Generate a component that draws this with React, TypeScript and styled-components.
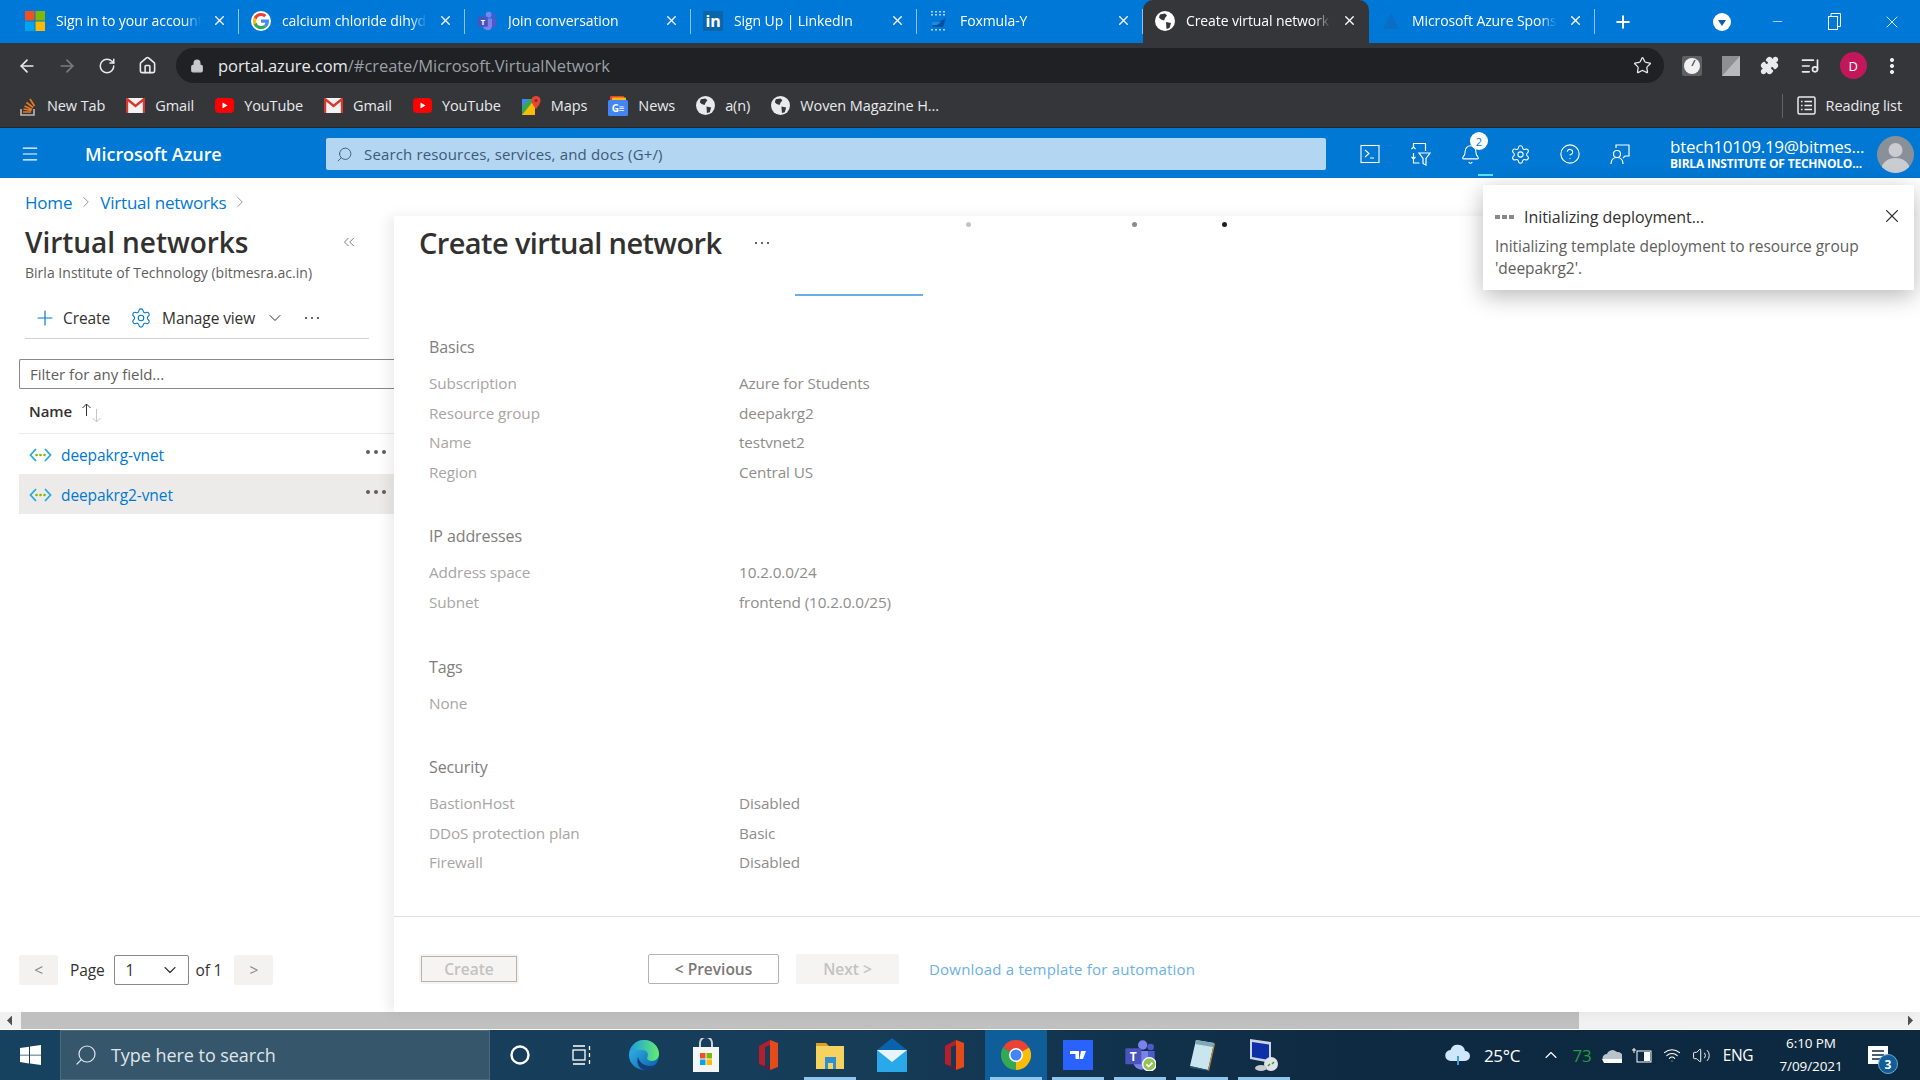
import React from "react";
import styled, { createGlobalStyle } from "styled-components";
import {
  ArrowLeft,
  ArrowRight,
  RotateCw,
  Home as HomeIcon,
  Lock,
  Star,
  Puzzle,
  X,
  Plus,
  Minus,
  Settings,
  ChevronRight,
  ChevronDown,
  ChevronsLeft,
  Search,
  Menu,
  Bell,
  CircleHelp,
  ChevronUp,
  Wifi,
  Volume2,
  ListMusic,
} from "lucide-react";

const GlobalStyle = createGlobalStyle`
  html, body {
    margin: 0;
    padding: 0;
    width: 1920px;
    height: 1080px;
    overflow: hidden;
    background: #fff;
    font-family: "Open Sans", "Noto Sans", sans-serif;
  }
  * { box-sizing: border-box; }
`;

const Screen = styled.div`
  position: relative;
  width: 1920px;
  height: 1080px;
  display: flex;
  flex-direction: column;
  overflow: hidden;
`;

const FlippedSearch = styled(Search)`
  transform: scaleX(-1);
`;

/* ---------- chrome tabs ---------- */

const TabStrip = styled.div`
  height: 43px;
  background: #0078d7;
  display: flex;
  align-items: stretch;
  padding-left: 13px;
`;

const Tab = styled.div<{ $active?: boolean }>`
  width: 226px;
  display: flex;
  align-items: center;
  padding: 0 12px 2px;
  gap: 11px;
  color: #fff;
  font-size: 14px;
  letter-spacing: -0.1px;
  position: relative;
  background: ${(p) => (p.$active ? "#35363a" : "transparent")};
  border-radius: ${(p) => (p.$active ? "10px 10px 0 0" : "0")};
  &::after {
    content: "";
    position: absolute;
    right: 0;
    top: 9px;
    bottom: 9px;
    width: 1px;
    background: ${(p) => (p.$active ? "transparent" : "rgba(255,255,255,0.55)")};
  }
`;

const TabFavicon = styled.span`
  width: 20px;
  height: 20px;
  flex: none;
  display: flex;
  align-items: center;
  justify-content: center;
`;

const TabTitle = styled.span`
  flex: 1;
  overflow: hidden;
  white-space: nowrap;
  -webkit-mask-image: linear-gradient(90deg, #000 88%, transparent 100%);
  mask-image: linear-gradient(90deg, #000 88%, transparent 100%);
`;

const NewTabButton = styled.div`
  width: 56px;
  display: flex;
  align-items: center;
  justify-content: center;
  color: #fff;
`;

const WindowControls = styled.div`
  margin-left: auto;
  display: flex;
  align-items: center;
  color: #fff;
`;

const ProfileDrop = styled.div`
  width: 18px;
  height: 18px;
  border-radius: 50%;
  background: #fff;
  margin-right: 18px;
  display: flex;
  align-items: center;
  justify-content: center;
  &::after {
    content: "";
    border-left: 4px solid transparent;
    border-right: 4px solid transparent;
    border-top: 6px solid #0d5fa8;
    margin-top: 2px;
  }
`;

const WindowButton = styled.div`
  width: 57px;
  height: 36px;
  display: flex;
  align-items: center;
  justify-content: center;
`;

/* ---------- address bar ---------- */

const Toolbar = styled.div`
  height: 45px;
  background: #35363a;
  display: flex;
  align-items: center;
  color: #e8eaed;
`;

const NavButton = styled.div<{ $muted?: boolean }>`
  width: 40px;
  height: 36px;
  display: flex;
  align-items: center;
  justify-content: center;
  color: ${(p) => (p.$muted ? "#7b7c7f" : "#e8eaed")};
`;

const NavGroup = styled.div`
  display: flex;
  padding-left: 7px;
  width: 176px;
`;

const Omnibox = styled.div`
  width: 1488px;
  height: 35px;
  border-radius: 18px;
  background: #202124;
  display: flex;
  align-items: center;
  padding: 0 12px 0 14px;
  font-size: 16.5px;
  letter-spacing: -0.06px;
  color: #9aa0a6;
`;

const UrlHost = styled.span`
  color: #e8eaed;
  margin-left: 14px;
`;

const OmniboxStar = styled.span`
  margin-left: auto;
  display: flex;
  color: #e8eaed;
`;

const ToolbarIcons = styled.div`
  flex: 1;
  display: flex;
  align-items: center;
  justify-content: space-between;
  padding: 0 26px 0 18px;
`;

const ProfileCircle = styled.div`
  width: 27px;
  height: 27px;
  border-radius: 50%;
  background: #c2185b;
  color: #fff;
  font-size: 13px;
  margin-right: 3px;
  display: flex;
  align-items: center;
  justify-content: center;
`;

const KebabDots = styled.div`
  width: 4px;
  height: 16px;
  background: radial-gradient(circle at 2px 2px, #e8eaed 1.9px, transparent 2.2px) 0 0 / 4px 6px;
`;

/* ---------- bookmarks ---------- */

const BookmarksBar = styled.div`
  height: 40px;
  background: #35363a;
  border-bottom: 1px solid #24262a;
  display: flex;
  align-items: center;
  padding: 0 0 4px 19px;
  color: #e8eaed;
  font-size: 14.5px;
  letter-spacing: -0.1px;
  gap: 21px;
`;

const Bookmark = styled.div`
  display: flex;
  align-items: center;
  gap: 10px;
  white-space: nowrap;
`;

const ReadingList = styled.div`
  margin-left: auto;
  border-left: 1px solid #5f6368;
  height: 24px;
  padding: 0 18px 0 14px;
  display: flex;
  align-items: center;
  gap: 10px;
`;

/* ---------- azure header ---------- */

const AzureBar = styled.header`
  height: 50px;
  background: #0078d4;
  display: flex;
  align-items: center;
  padding-top: 2px;
  color: #fff;
`;

const Hamburger = styled.div`
  width: 85px;
  padding-left: 20px;
  display: flex;
`;

const Brand = styled.div`
  width: 241px;
  font-size: 18px;
  font-weight: 600;
  letter-spacing: -0.05px;
`;

const PortalSearch = styled.div`
  width: 1000px;
  height: 32px;
  background: #b3d6f2;
  border-radius: 2px;
  display: flex;
  align-items: center;
  gap: 11px;
  padding-left: 10px;
  color: #3c5a78;
  font-size: 15px;
  letter-spacing: 0.15px;
`;

const HeaderIcons = styled.div`
  display: flex;
  margin-left: 19px;
`;

const HeaderIcon = styled.div<{ $active?: boolean }>`
  position: relative;
  width: 50px;
  height: 50px;
  display: flex;
  align-items: center;
  justify-content: center;
  &::after {
    content: "";
    display: ${(p) => (p.$active ? "block" : "none")};
    position: absolute;
    left: 33px;
    bottom: 3px;
    width: 15px;
    height: 2px;
    background: #50e6ff;
  }
`;

const NotifyBadge = styled.span`
  position: absolute;
  top: 3px;
  left: 25px;
  width: 18px;
  height: 18px;
  border-radius: 50%;
  background: #fff;
  color: #0078d4;
  font-size: 11px;
  display: flex;
  align-items: center;
  justify-content: center;
`;

const Account = styled.div`
  margin-left: 25px;
  width: 207px;
  padding-top: 2px;
  display: flex;
  flex-direction: column;
  line-height: 17px;
`;

const AccountName = styled.div`
  font-size: 17px;
  letter-spacing: -0.25px;
  white-space: nowrap;
`;

const AccountOrg = styled.div`
  font-size: 12px;
  font-weight: 700;
  letter-spacing: -0.2px;
  white-space: nowrap;
`;

const Avatar = styled.div`
  width: 37px;
  height: 37px;
  border-radius: 50%;
  background: #8a9099;
  overflow: hidden;
  display: flex;
`;

/* ---------- page ---------- */

const Main = styled.main`
  flex: 1;
  display: flex;
  flex-direction: column;
  min-height: 0;
  background: #fff;
`;

const Breadcrumb = styled.nav`
  height: 38px;
  padding: 10px 0 0 25px;
  display: flex;
  align-items: center;
  gap: 5px;
  font-size: 17px;
  letter-spacing: -0.2px;
  color: #0078d4;
`;

const Crumb = styled.span`
  color: #0078d4;
`;

const CrumbSep = styled.span`
  color: #8a8886;
  display: flex;
`;

const Workspace = styled.div`
  flex: 1;
  display: flex;
  min-height: 0;
`;

const Sidebar = styled.aside`
  width: 394px;
  flex: none;
  display: flex;
  flex-direction: column;
  padding-top: 8px;
`;

const SidebarHead = styled.div`
  padding: 0 25px;
  display: flex;
  align-items: center;
  justify-content: space-between;
  height: 36px;
`;

const SidebarTitle = styled.h1`
  margin: 0;
  font-size: 28px;
  font-weight: 600;
  letter-spacing: -0.05px;
  color: #323130;
  white-space: nowrap;
`;

const Collapse = styled.span`
  display: flex;
  color: #605e5c;
  margin-right: 11px;
`;

const SidebarSub = styled.div`
  padding-left: 25px;
  height: 26px;
  line-height: 26px;
  font-size: 14px;
  letter-spacing: 0.02px;
  color: #605e5c;
`;

const CommandBar = styled.div`
  margin: 10px 25px 0;
  height: 43px;
  border-bottom: 1px solid #d2d0ce;
  display: flex;
  align-items: center;
  font-size: 15.5px;
  letter-spacing: -0.1px;
  color: #323130;
  padding: 2px 0 0 8px;
`;

const CommandItem = styled.div<{ $gap: number }>`
  display: flex;
  align-items: center;
  gap: ${(p) => p.$gap}px;
  margin-right: 20px;
  color: #323130;
  white-space: nowrap;
`;

const MoreDots = styled.span<{ $color?: string; $size?: number }>`
  display: flex;
  gap: ${(p) => ((p.$size ?? 2) > 2 ? p.$size : 4)}px;
  & > i {
    display: block;
    width: ${(p) => p.$size ?? 2}px;
    height: ${(p) => p.$size ?? 2}px;
    border-radius: 50%;
    background: ${(p) => p.$color ?? "#323130"};
  }
`;

const FilterBox = styled.div`
  margin: 20px 0 0 19px;
  height: 30px;
  border: 1px solid #8a8886;
  border-right: none;
  border-radius: 2px 0 0 2px;
  display: flex;
  align-items: center;
  padding-left: 10px;
  font-size: 15px;
  letter-spacing: 0;
  color: #605e5c;
`;

const ColumnHeader = styled.div`
  margin-left: 19px;
  height: 45px;
  border-bottom: 1px solid #edebe9;
  display: flex;
  align-items: center;
  padding-left: 10px;
  font-size: 15px;
  font-weight: 600;
  letter-spacing: -0.1px;
  color: #323130;
  gap: 9px;
`;

const SortArrows = styled.span`
  display: flex;
  align-items: center;
  margin-top: 3px;
`;

const ResourceRow = styled.div<{ $selected?: boolean }>`
  margin-left: 19px;
  height: 40px;
  background: ${(p) => (p.$selected ? "#edebe9" : "transparent")};
  display: flex;
  align-items: center;
  padding: 1px 8px 0 10px;
  gap: 9px;
  font-size: 15.5px;
  letter-spacing: -0.1px;
  color: #0078d4;
`;

const RowMenu = styled.span`
  margin-left: auto;
  margin-bottom: 5px;
`;

const Pager = styled.div`
  margin-top: auto;
  margin-bottom: 27px;
  padding-left: 19px;
  height: 30px;
  display: flex;
  align-items: center;
  font-size: 15.5px;
  letter-spacing: -0.15px;
  color: #323130;
`;

const PagerArrow = styled.div`
  width: 39px;
  height: 30px;
  background: #f3f2f1;
  border-radius: 2px;
  color: #8a8886;
  display: flex;
  align-items: center;
  justify-content: center;
`;

const PagerLabel = styled.span<{ $left: number; $right: number }>`
  margin: 0 ${(p) => p.$right}px 0 ${(p) => p.$left}px;
`;

const PageSelect = styled.div`
  width: 75px;
  height: 30px;
  border: 1px solid #8a8886;
  border-radius: 2px;
  display: flex;
  align-items: center;
  justify-content: space-between;
  padding: 0 8px 0 10px;
`;

const Blade = styled.section`
  flex: 1;
  min-width: 0;
  display: flex;
  flex-direction: column;
  background: #fff;
  box-shadow: -6px 0 12px rgba(0, 0, 0, 0.07);
  position: relative;
`;

const BladeTitleRow = styled.div`
  height: 53px;
  margin-bottom: 1px;
  padding-left: 25px;
  display: flex;
  align-items: center;
  gap: 34px;
`;

const BladeTitle = styled.h2`
  margin: 0;
  font-size: 29px;
  font-weight: 600;
  letter-spacing: -0.6px;
  color: #323130;
  white-space: nowrap;
`;

const TabIndicator = styled.div`
  margin: 24px 0 0 401px;
  width: 128px;
  height: 2px;
  background: #69afe5;
`;

const BladeBody = styled.div`
  flex: 1;
  padding: 36px 0 0 35px;
`;

const ReviewSection = styled.div`
  margin-bottom: 34px;
`;

const SectionHeading = styled.div`
  height: 30px;
  line-height: 30px;
  margin-bottom: 7px;
  font-size: 16px;
  font-weight: 500;
  letter-spacing: -0.1px;
  color: #807e7c;
`;

const ReviewRow = styled.div`
  height: 29.6px;
  line-height: 29.6px;
  display: grid;
  grid-template-columns: 310px 1fr;
  font-size: 15.3px;
  letter-spacing: -0.12px;
`;

const ReviewLabel = styled.span`
  color: #a8a6a4;
`;

const ReviewValue = styled.span`
  color: #8f8d8b;
`;

const BladeFooter = styled.div`
  height: 96px;
  border-top: 1px solid #e1dfdd;
  padding: 37px 0 0 25px;
  display: flex;
  align-items: flex-start;
  font-size: 15px;
`;

const FooterButton = styled.div<{ $variant: "create" | "outline" | "disabled"; $width: number; $left: number }>`
  width: ${(p) => p.$width}px;
  height: 30px;
  margin-left: ${(p) => p.$left}px;
  display: flex;
  align-items: center;
  justify-content: center;
  border-radius: 2px;
  font-weight: 600;
  letter-spacing: 0;
  font-size: 15.5px;
  color: ${(p) => (p.$variant === "outline" ? "#7a7876" : "#c4c2c0")};
  background: ${(p) => (p.$variant === "outline" ? "#fff" : "#f5f4f3")};
  border: ${(p) => (p.$variant === "outline" ? "1px solid #b5b3b1" : "none")};
  outline: ${(p) => (p.$variant === "create" ? "1px solid #b5b3b1" : "none")};
  outline-offset: -3px;
`;

const TemplateLink = styled.a`
  margin-left: 30px;
  height: 30px;
  line-height: 30px;
  font-size: 15px;
  letter-spacing: 0.2px;
  color: #6cb0e8;
`;

const LoadingDot = styled.span<{ $left: number; $color: string }>`
  position: absolute;
  top: 222px;
  left: ${(p) => p.$left}px;
  width: 5px;
  height: 5px;
  border-radius: 50%;
  background: ${(p) => p.$color};
`;

const Toast = styled.div`
  position: absolute;
  left: 1483px;
  top: 185px;
  width: 431px;
  height: 105px;
  background: #fff;
  box-shadow: 0 6px 22px rgba(0, 0, 0, 0.28);
  padding: 21px 12px 0;
  color: #605e5c;
  font-size: 15.5px;
  letter-spacing: -0.05px;
`;

const ToastHead = styled.div`
  height: 22px;
  display: flex;
  align-items: center;
  gap: 10px;
  color: #323130;
  font-size: 16px;
  font-weight: 500;
  margin-bottom: 7px;
`;

const ToastDots = styled.span`
  display: flex;
  gap: 2px;
  & > i {
    display: block;
    width: 5px;
    height: 4px;
    background: #8a8886;
  }
`;

const ToastClose = styled.span`
  position: absolute;
  right: 11px;
  top: 20px;
  display: flex;
  color: #323130;
`;

const ToastBody = styled.div`
  line-height: 22px;
  width: 380px;
`;

/* ---------- page scrollbar ---------- */

const PageScroll = styled.div`
  height: 18px;
  background: #f1f1f1;
  border-bottom: 1px solid #fff;
  display: flex;
  align-items: center;
  padding-right: 7px;
`;

const ScrollArrow = styled.span<{ $dir: "left" | "right" }>`
  flex: none;
  width: 5px;
  height: 10px;
  margin-left: ${(p) => (p.$dir === "left" ? "7px" : "auto")};
  margin-right: ${(p) => (p.$dir === "left" ? "9px" : "0")};
  background: #505050;
  clip-path: ${(p) =>
    p.$dir === "left" ? "polygon(100% 0, 0 50%, 100% 100%)" : "polygon(0 0, 100% 50%, 0 100%)"};
`;

const ScrollThumb = styled.span`
  width: 1558px;
  height: 17px;
  background: #c0c0c0;
`;

/* ---------- windows taskbar ---------- */

const Taskbar = styled.footer`
  height: 50px;
  flex: none;
  background: linear-gradient(90deg, #17425f 0%, #163c58 45%, #0e2a42 70%, #0d2940 100%);
  display: flex;
  align-items: stretch;
  color: #fff;
`;

const StartButton = styled.div`
  width: 60px;
  display: flex;
  align-items: center;
  justify-content: center;
`;

const TaskSearch = styled.div`
  width: 430px;
  background: #36566b;
  border: 1px solid #4a6a80;
  display: flex;
  align-items: center;
  padding-left: 13px;
  gap: 13px;
  font-size: 18px;
  letter-spacing: -0.05px;
  color: #dfe6ea;
`;

const TaskApps = styled.div`
  display: flex;
  margin-left: -1px;
`;

const TaskApp = styled.div<{ $open?: boolean; $active?: boolean }>`
  width: 62px;
  position: relative;
  display: flex;
  align-items: center;
  justify-content: center;
  background: ${(p) => (p.$active ? "#0f5e99" : "transparent")};
  &::after {
    content: "";
    display: ${(p) => (p.$open ? "block" : "none")};
    position: absolute;
    left: 5px;
    right: 5px;
    bottom: 0;
    height: 3px;
    background: #90c6ee;
  }
`;

const Tray = styled.div`
  margin-left: auto;
  padding-right: 18px;
  display: flex;
  align-items: center;
  font-size: 17px;
  color: #fff;
`;

const TrayItem = styled.span<{ $w: number; $color?: string; $after?: number }>`
  width: ${(p) => p.$w}px;
  margin-right: ${(p) => p.$after ?? 0}px;
  display: flex;
  justify-content: center;
  align-items: center;
  color: ${(p) => p.$color ?? "#fff"};
  letter-spacing: -0.3px;
`;

const TrayLang = styled(TrayItem)`
  font-size: 15.5px;
`;

const Clock = styled.div`
  width: 86px;
  margin-left: 8px;
  text-align: center;
  font-size: 13.5px;
  line-height: 23px;
  letter-spacing: -0.1px;
  white-space: nowrap;
`;

const ActionCenter = styled.div`
  position: relative;
  width: 48px;
  height: 50px;
  display: flex;
  align-items: center;
  justify-content: center;
`;

const ActionBadge = styled.span`
  position: absolute;
  left: 24px;
  top: 24px;
  width: 20px;
  height: 20px;
  border-radius: 50%;
  background: #0f5e99;
  border: 1px solid #6fa8d4;
  font-size: 12px;
  font-weight: 700;
  display: flex;
  align-items: center;
  justify-content: center;
`;

/* ---------- drawn icons ---------- */

const MsLogo = ({ size = 20 }: { size?: number }) => (
  <svg width={size} height={size} viewBox="0 0 20 20">
    <rect width="9.500" height="9.500" fill="#f25022" />
    <rect x="10.500" width="9.500" height="9.500" fill="#7fba00" />
    <rect y="10.500" width="9.500" height="9.500" fill="#00a4ef" />
    <rect x="10.500" y="10.500" width="9.500" height="9.500" fill="#ffb900" />
  </svg>
);

const GoogleLogo = () => (
  <svg width="20" height="20" viewBox="0 0 48 48">
    <circle cx="24" cy="24" r="24" fill="#fff" />
    <path fill="#ea4335" d="M24 12c3 0 5.600 1 7.700 3l5.500-5.500C33.700 6.300 29.200 4.500 24 4.500 16.400 4.500 9.800 8.900 6.600 15.300l6.500 5C14.600 15.500 18.900 12 24 12z" />
    <path fill="#4285f4" d="M43 24.500c0-1.400-.1-2.700-.3-4H24v7.600h10.700c-.5 2.500-1.900 4.600-4 6l6.300 4.900c3.700-3.400 6-8.500 6-14.500z" />
    <path fill="#fbbc05" d="M13.100 28.300c-.4-1.200-.6-2.600-.6-4s.2-2.800.6-4l-6.500-5C5.300 18 4.500 21 4.500 24.300s.8 6.300 2.100 9z" />
    <path fill="#34a853" d="M24 43.500c5.200 0 9.600-1.700 12.800-4.600l-6.300-4.900c-1.700 1.200-3.900 1.900-6.500 1.900-5.100 0-9.400-3.400-10.900-8l-6.500 5C9.800 39.100 16.400 43.500 24 43.500z" />
  </svg>
);

const TeamsLogo = ({ size = 20, check }: { size?: number; check?: boolean }) => (
  <svg width={size} height={size} viewBox="0 0 24 24">
    <circle cx="14" cy="4.500" r="3.500" fill="#7b83eb" />
    <circle cx="20" cy="6" r="2.500" fill="#5059c9" />
    <path d="M16 9h7v7a4 4 0 0 1-4 4h-1z" fill="#5059c9" />
    <path d="M7 9h11v9a5 5 0 0 1-5 5 6 6 0 0 1-6-6z" fill="#7b83eb" />
    <rect x="1" y="7" width="12" height="12" rx="1" fill="#4b53bc" />
    <text x="7" y="16.500" fontSize="9" fontWeight="700" fill="#fff" textAnchor="middle" fontFamily="Open Sans">T</text>
    {check && <circle cx="19" cy="19" r="5" fill="#92c353" stroke="#fff" strokeWidth="1" />}
    {check && <path d="M16.800 19l1.700 1.700 2.800-3" stroke="#fff" strokeWidth="1.300" fill="none" />}
  </svg>
);

const LinkedInLogo = () => (
  <svg width="20" height="20" viewBox="0 0 20 20">
    <rect width="20" height="20" fill="#0a66a8" />
    <text x="10" y="16" textAnchor="middle" fontSize="16" fontWeight="700" fill="#fff" fontFamily="Open Sans">in</text>
  </svg>
);

const FoxmulaLogo = () => (
  <svg width="20" height="20" viewBox="0 0 20 20">
    <g fill="#b5d3f0">
      {[2, 6, 10, 14].map((x) =>
        [1, 4, 19].map((y) => <rect key={`${x}-${y}`} x={x} y={y - 1} width="2" height="1.500" />)
      )}
    </g>
    <path d="M3 15l14-8-3 9H5z" fill="#0b4f9e" />
    <path d="M3 11h9l-4 3H3z" fill="#1d8be0" />
  </svg>
);

const AzureTriangle = () => (
  <svg width="20" height="20" viewBox="0 0 20 20">
    <path d="M10 2l8 16H2z" fill="#0a6fc4" />
  </svg>
);

const StackLogo = () => (
  <svg width="18" height="22" viewBox="0 0 18 22">
    <path d="M2 14v6h13v-6" stroke="#bcbbb9" strokeWidth="1.600" fill="none" />
    <path d="M4 17h8M4.500 14l8 1.500M5.500 11l7.500 3.500M7.500 7.500l6.500 5M11 4l4.500 7" stroke="#e87a24" strokeWidth="1.700" />
  </svg>
);

const GmailLogo = () => (
  <svg width="19" height="15" viewBox="0 0 19 15">
    <rect width="19" height="15" fill="#f2f2f2" />
    <path d="M1 15V1l8.500 7L18 1v14" fill="none" stroke="#d8392b" strokeWidth="2.400" />
  </svg>
);

const YouTubeLogo = () => (
  <svg width="19" height="15" viewBox="0 0 19 15">
    <rect width="19" height="15" rx="4" fill="#f00" />
    <path d="M7.500 4.500l5 3-5 3z" fill="#fff" />
  </svg>
);

const MapsLogo = () => (
  <svg width="19" height="20" viewBox="0 0 19 20">
    <path d="M0 3h13v16H0z" fill="#34a853" />
    <path d="M0 19l13-16v16z" fill="#fbbc05" />
    <path d="M0 3h7L0 11z" fill="#4285f4" />
    <path d="M14 0a4.500 4.500 0 0 1 4.500 4.500C18.500 8 14 13 14 13S9.500 8 9.500 4.500A4.500 4.500 0 0 1 14 0z" fill="#ea4335" />
    <circle cx="14" cy="4.500" r="1.600" fill="#8c2a20" />
  </svg>
);

const NewsLogo = () => (
  <svg width="20" height="20" viewBox="0 0 20 20">
    <rect x="2" y="0" width="14" height="6" rx="1" fill="#ea4335" />
    <rect x="4" y="1.500" width="14" height="6" rx="1" fill="#fbbc05" />
    <rect y="4" width="20" height="16" rx="1.500" fill="#4285f4" />
    <text x="10" y="16" textAnchor="middle" fontSize="10" fontWeight="700" fill="#fff" fontFamily="Open Sans">G≡</text>
  </svg>
);

const GlobeFill = ({ color = "#e8eaed", bg = "#35363a", size = 19 }: { color?: string; bg?: string; size?: number }) => (
  <svg width={size} height={size} viewBox="0 0 20 20">
    <circle cx="10" cy="10" r="10" fill={color} />
    <path d="M5 3.500l5-1 2 2-2 2.500-1 2.500-3-1-2-2zM11 11l5 1-1.500 5-3 1z" fill={bg} />
  </svg>
);

const ExtensionBadge = () => (
  <svg width="20" height="20" viewBox="0 0 20 20">
    <rect width="20" height="20" rx="2" fill="#5f6063" />
    <circle cx="10" cy="10" r="8" fill="#f1f1f1" />
    <path d="M10 10l3-6" stroke="#5f6063" strokeWidth="1.500" />
  </svg>
);

const GreyTile = () => (
  <svg width="18" height="20" viewBox="0 0 18 20">
    <rect width="18" height="20" fill="#8e8f91" />
    <path d="M0 20L18 0v20z" fill="#b8b9ba" />
  </svg>
);

const ReadingIcon = () => (
  <svg width="19" height="19" viewBox="0 0 19 19" fill="none" stroke="#e8eaed" strokeWidth="1.500">
    <rect x="1" y="1" width="17" height="17" rx="1.500" />
    <path d="M7.500 5.500H15M7.500 9.500H15M7.500 13.500H15M4 5.500h1.500M4 9.500h1.500M4 13.500h1.500" />
  </svg>
);

const TerminalBox = () => (
  <svg width="20" height="20" viewBox="0 0 20 20" fill="none" stroke="#fff" strokeWidth="1.100">
    <rect x="1" y="1.500" width="18" height="17" />
    <path d="M5 6l4 3.500L5 13M10 14h4" />
  </svg>
);

const DirectoryFilter = () => (
  <svg width="22" height="24" viewBox="0 0 22 24" fill="none" stroke="#fff" strokeWidth="1.200">
    <path d="M4.500 5V1.500h12V9M4.500 11v10h6" />
    <path d="M2.500 7l2-2 2 2M2.500 15l2 2 2-2" />
    <path d="M10 11h11l-4 5.500V23l-3-1.500v-5z" />
  </svg>
);

const FeedbackIcon = () => (
  <svg width="22" height="22" viewBox="0 0 22 22" fill="none" stroke="#fff" strokeWidth="1.200">
    <path d="M7 5V2h13v11h-4l-2 2" />
    <circle cx="8" cy="11" r="3.500" />
    <path d="M2 21c0-4 2.500-6.500 6-6.500s6 2.500 6 6.500" />
  </svg>
);

const AvatarFigure = () => (
  <svg width="37" height="37" viewBox="0 0 37 37">
    <circle cx="18.500" cy="14" r="7" fill="#c9ccd1" />
    <ellipse cx="18.500" cy="33" rx="14" ry="11" fill="#c9ccd1" />
  </svg>
);

const VnetIcon = () => (
  <svg width="23" height="16" viewBox="0 0 23 16" fill="none">
    <path d="M7 2L1.500 8 7 14" stroke="#27a9e1" strokeWidth="1.800" />
    <path d="M16 2l5.500 6L16 14" stroke="#27a9e1" strokeWidth="1.800" />
    <circle cx="7.500" cy="8" r="1.300" fill="#7fba00" />
    <circle cx="11.500" cy="8" r="1.300" fill="#7fba00" />
    <circle cx="15.500" cy="8" r="1.300" fill="#7fba00" />
  </svg>
);

const SortIcon = () => (
  <svg width="24" height="20" viewBox="0 0 24 20" fill="none">
    <path d="M5.500 13V1M1.500 5L5.500 1l4 4" stroke="#323130" />
    <path d="M15.500 6v13M11.500 15l4 4 4-4" stroke="#c8c6c4" />
  </svg>
);

const WindowsLogo = () => (
  <svg width="21" height="20" viewBox="0 0 21 20" fill="#fff">
    <path d="M0 3l9-1.300v8H0zM10 1.500L21 0v9.700H10zM0 10.500h9v8L0 17zM10 10.500h11V20l-11-1.500z" />
  </svg>
);

const TaskViewIcon = () => (
  <svg width="20" height="20" viewBox="0 0 20 20" fill="none" stroke="#fff" strokeWidth="1.300">
    <path d="M1 1h12M1 19h12" />
    <rect x="1" y="5" width="12" height="10" />
    <path d="M17.500 1v4M17.500 8v4M17.500 15v4" />
  </svg>
);

const EdgeLogo = () => (
  <svg width="32" height="32" viewBox="0 0 32 32">
    <defs>
      <linearGradient id="edgeA" x1="0" y1="0" x2="1" y2="1">
        <stop offset="0" stopColor="#35c1f1" />
        <stop offset="1" stopColor="#0c59a4" />
      </linearGradient>
      <linearGradient id="edgeB" x1="0" y1="0" x2="1" y2="0">
        <stop offset="0" stopColor="#1b9de2" />
        <stop offset="1" stopColor="#66eb6e" />
      </linearGradient>
    </defs>
    <circle cx="16" cy="16" r="15" fill="url(#edgeA)" />
    <path d="M2 13C4 5 10 1 16 1c8 0 15 6 15 14 0 4-3 7-7 7-3 0-5-1-5-3 2-3 1-8-5-8-6 0-12 0-12 2z" fill="url(#edgeB)" />
    <path d="M17 31c-6-1-9-7-7-13 1 5 6 9 12 9 3 0 6-1 8-3-2 4-7 8-13 7z" fill="#123f7a" />
  </svg>
);

const StoreLogo = () => (
  <svg width="30" height="34" viewBox="0 0 30 34">
    <path d="M9 9V5a6 6 0 0 1 12 0v4" stroke="#d0d3d6" strokeWidth="2" fill="none" />
    <rect x="2" y="9" width="26" height="25" fill="#f4f5f6" />
    <rect x="9" y="15" width="5.500" height="5.500" fill="#f25022" />
    <rect x="15.500" y="15" width="5.500" height="5.500" fill="#7fba00" />
    <rect x="9" y="21.500" width="5.500" height="5.500" fill="#00a4ef" />
    <rect x="15.500" y="21.500" width="5.500" height="5.500" fill="#ffb900" />
  </svg>
);

const OfficeLogo = () => (
  <svg width="22" height="32" viewBox="0 0 22 32">
    <path d="M13 1l8 3v24l-8 3z" fill="#e64a19" />
    <path d="M13 1L2 7v18l6 3V8l5-2z" fill="#b3202c" />
    <path d="M2 25l11 6v-3l-5-1z" fill="#7a1030" />
  </svg>
);

const ExplorerLogo = () => (
  <svg width="30" height="30" viewBox="0 0 30 30">
    <path d="M1 3h10l3 3h-13z" fill="#e0a21b" />
    <rect x="1" y="6" width="28" height="23" fill="#f6d25e" />
    <rect x="10" y="17" width="11" height="12" fill="#2e8fd6" />
    <rect x="13" y="23" width="5" height="6" fill="#f6d25e" />
  </svg>
);

const MailLogo = () => (
  <svg width="30" height="34" viewBox="0 0 30 34">
    <path d="M15 0l15 12H0z" fill="#0a62ac" />
    <rect y="12" width="30" height="22" fill="#29a8ea" />
    <path d="M0 12h30L15 24z" fill="#e8f4fb" />
  </svg>
);

const ChromeLogo = () => (
  <svg width="30" height="30" viewBox="0 0 30 30">
    <path d="M15 15L2 7.500A15 15 0 0 1 28 7.500z" fill="#ea4335" />
    <path d="M15 15L28 7.500A15 15 0 0 1 15 30z" fill="#fbbc05" />
    <path d="M15 15v15A15 15 0 0 1 2 7.500z" fill="#34a853" />
    <circle cx="15" cy="15" r="7" fill="#fff" />
    <circle cx="15" cy="15" r="5.500" fill="#4285f4" />
  </svg>
);

const TvLogo = () => (
  <svg width="30" height="30" viewBox="0 0 30 30">
    <rect width="30" height="30" fill="#2962ff" />
    <path d="M7 11h9v8h-3.500v-5H7zM18 11h5l-3 8h-3.500z" fill="#fff" />
  </svg>
);

const NotepadLogo = () => (
  <svg width="28" height="34" viewBox="0 0 28 34">
    <path d="M8 2l18 3-6 27-18-4z" fill="#c9e6ee" />
    <path d="M8 2l18 3-1 4-18-3z" fill="#7fa8b8" />
    <path d="M2 28l18 4 1.500 1-19-3z" fill="#1f5a6c" />
    <path d="M20 32l6-27 1 1-6 27z" fill="#c08b3b" />
  </svg>
);

const RemoteLogo = () => (
  <svg width="32" height="34" viewBox="0 0 32 34">
    <path d="M2 1l21 3v21L2 21z" fill="#c9d4e6" />
    <path d="M4 4l17 2.500v15.500L4 19z" fill="#0d2fa8" />
    <circle cx="23" cy="26" r="7" fill="#dfe3e6" />
    <ellipse cx="13" cy="30" rx="6" ry="3" fill="#c6cbcf" />
    <path d="M20 28l2-2M26 24l-2 2" stroke="#3b9b3b" strokeWidth="1.600" />
  </svg>
);

const CloudRain = () => (
  <svg width="26" height="24" viewBox="0 0 26 24">
    <path d="M6 18a5.500 5.500 0 0 1-.5-11A7.500 7.500 0 0 1 20 8a5 5 0 0 1 0 10z" fill="#cfe7fa" />
    <path d="M13 13v9" stroke="#3f9be0" strokeWidth="2" />
  </svg>
);

const TrayCloud = () => (
  <svg width="20" height="18" viewBox="0 0 20 18">
    <path d="M5 17a4.500 4.500 0 0 1 0-9 6 6 0 0 1 10-2 5 5 0 0 1 1 11z" fill="#b9c3ca" />
    <path d="M0 13h20v4H2z" fill="#fff" />
  </svg>
);

const BatteryPlug = () => (
  <svg width="21" height="16" viewBox="0 0 21 16" fill="none" stroke="#fff">
    <rect x="6" y="4" width="14" height="11" />
    <rect x="13" y="5" width="6" height="9" fill="#fff" stroke="none" />
    <path d="M3 1v5M1 3h4" />
  </svg>
);

const NotificationGlyph = () => (
  <svg width="20" height="18" viewBox="0 0 20 18">
    <rect width="20" height="18" fill="#fff" />
    <path d="M4 5h12M4 9h12M4 13h9" stroke="#0d2940" strokeWidth="1.500" />
  </svg>
);

const Dots = ({ color, size }: { color?: string; size?: number }) => (
  <MoreDots $color={color} $size={size}>
    <i />
    <i />
    <i />
  </MoreDots>
);

/* ---------- data ---------- */

const tabs: { title: string; icon: React.ReactNode; active?: boolean }[] = [
  { title: "Sign in to your account", icon: <MsLogo /> },
  { title: "calcium chloride dihydrate", icon: <GoogleLogo /> },
  { title: "Join conversation", icon: <TeamsLogo /> },
  { title: "Sign Up | LinkedIn", icon: <LinkedInLogo /> },
  { title: "Foxmula-Y", icon: <FoxmulaLogo /> },
  { title: "Create virtual network", icon: <GlobeFill color="#fff" size={20} />, active: true },
  { title: "Microsoft Azure Sponsorship", icon: <AzureTriangle /> },
];

const bookmarks: { label: string; icon: React.ReactNode }[] = [
  { label: "New Tab", icon: <StackLogo /> },
  { label: "Gmail", icon: <GmailLogo /> },
  { label: "YouTube", icon: <YouTubeLogo /> },
  { label: "Gmail", icon: <GmailLogo /> },
  { label: "YouTube", icon: <YouTubeLogo /> },
  { label: "Maps", icon: <MapsLogo /> },
  { label: "News", icon: <NewsLogo /> },
  { label: "a(n)", icon: <GlobeFill /> },
  { label: "Woven Magazine H...", icon: <GlobeFill /> },
];

const review: { heading: string; rows: [string, string][] }[] = [
  {
    heading: "Basics",
    rows: [
      ["Subscription", "Azure for Students"],
      ["Resource group", "deepakrg2"],
      ["Name", "testvnet2"],
      ["Region", "Central US"],
    ],
  },
  {
    heading: "IP addresses",
    rows: [
      ["Address space", "10.2.0.0/24"],
      ["Subnet", "frontend (10.2.0.0/25)"],
    ],
  },
  { heading: "Tags", rows: [["None", ""]] },
  {
    heading: "Security",
    rows: [
      ["BastionHost", "Disabled"],
      ["DDoS protection plan", "Basic"],
      ["Firewall", "Disabled"],
    ],
  },
];

const taskApps: { icon: React.ReactNode; open?: boolean; active?: boolean }[] = [
  { icon: <svg width="22" height="22" viewBox="0 0 22 22"><circle cx="11" cy="11" r="8.500" fill="none" stroke="#fff" strokeWidth="2.400" /></svg> },
  { icon: <TaskViewIcon /> },
  { icon: <EdgeLogo /> },
  { icon: <StoreLogo /> },
  { icon: <OfficeLogo /> },
  { icon: <ExplorerLogo />, open: true },
  { icon: <MailLogo /> },
  { icon: <OfficeLogo /> },
  { icon: <ChromeLogo />, open: true, active: true },
  { icon: <TvLogo />, open: true },
  { icon: <TeamsLogo size={32} check />, open: true },
  { icon: <NotepadLogo />, open: true },
  { icon: <RemoteLogo />, open: true },
];

export default function App() {
  return (
    <Screen>
      <GlobalStyle />

      <TabStrip>
        {tabs.map((tab) => (
          <Tab key={tab.title} $active={tab.active}>
            <TabFavicon>{tab.icon}</TabFavicon>
            <TabTitle>{tab.title}</TabTitle>
            <X size={15} strokeWidth={2.2} />
          </Tab>
        ))}
        <NewTabButton>
          <Plus size={20} strokeWidth={2.4} />
        </NewTabButton>
        <WindowControls>
          <ProfileDrop />
          <WindowButton>
            <Minus size={15} strokeWidth={1} />
          </WindowButton>
          <WindowButton>
            <svg width="14" height="20" viewBox="0 0 14 20" fill="none" stroke="#fff">
              <rect x="0.500" y="4.500" width="9" height="13" />
              <path d="M3 4V1.500h9.500v13H10" />
            </svg>
          </WindowButton>
          <WindowButton>
            <X size={20} strokeWidth={1} />
          </WindowButton>
        </WindowControls>
      </TabStrip>

      <Toolbar>
        <NavGroup>
          <NavButton><ArrowLeft size={20} /></NavButton>
          <NavButton $muted><ArrowRight size={20} /></NavButton>
          <NavButton><RotateCw size={18} /></NavButton>
          <NavButton><HomeIcon size={19} /></NavButton>
        </NavGroup>
        <Omnibox>
          <Lock size={14} fill="#c8c9cb" color="#c8c9cb" />
          <UrlHost>portal.azure.com</UrlHost>/#create/Microsoft.VirtualNetwork
          <OmniboxStar><Star size={19} strokeWidth={1.6} /></OmniboxStar>
        </Omnibox>
        <ToolbarIcons>
          <ExtensionBadge />
          <GreyTile />
          <Puzzle size={19} fill="#e8eaed" />
          <ListMusic size={20} />
          <ProfileCircle>D</ProfileCircle>
          <KebabDots />
        </ToolbarIcons>
      </Toolbar>

      <BookmarksBar>
        {bookmarks.map((b, i) => (
          <Bookmark key={`${b.label}-${i}`}>
            {b.icon}
            {b.label}
          </Bookmark>
        ))}
        <ReadingList>
          <ReadingIcon />
          Reading list
        </ReadingList>
      </BookmarksBar>

      <AzureBar>
        <Hamburger><Menu size={20} strokeWidth={1.4} /></Hamburger>
        <Brand>Microsoft Azure</Brand>
        <PortalSearch>
          <FlippedSearch size={17} strokeWidth={1.3} />
          Search resources, services, and docs (G+/)
        </PortalSearch>
        <HeaderIcons>
          <HeaderIcon><TerminalBox /></HeaderIcon>
          <HeaderIcon><DirectoryFilter /></HeaderIcon>
          <HeaderIcon $active>
            <Bell size={21} strokeWidth={1.2} />
            <NotifyBadge>2</NotifyBadge>
          </HeaderIcon>
          <HeaderIcon><Settings size={21} strokeWidth={1.2} /></HeaderIcon>
          <HeaderIcon><CircleHelp size={22} strokeWidth={1.2} /></HeaderIcon>
          <HeaderIcon><FeedbackIcon /></HeaderIcon>
        </HeaderIcons>
        <Account>
          <AccountName>btech10109.19@bitmes...</AccountName>
          <AccountOrg>BIRLA INSTITUTE OF TECHNOLO...</AccountOrg>
        </Account>
        <Avatar><AvatarFigure /></Avatar>
      </AzureBar>

      <Main>
        <Breadcrumb>
          <Crumb>Home</Crumb>
          <CrumbSep><ChevronRight size={18} strokeWidth={1.2} /></CrumbSep>
          <Crumb>Virtual networks</Crumb>
          <CrumbSep><ChevronRight size={18} strokeWidth={1.2} /></CrumbSep>
        </Breadcrumb>
        <Workspace>
          <Sidebar>
            <SidebarHead>
              <SidebarTitle>Virtual networks</SidebarTitle>
              <Collapse><ChevronsLeft size={18} strokeWidth={1.1} /></Collapse>
            </SidebarHead>
            <SidebarSub>Birla Institute of Technology (bitmesra.ac.in)</SidebarSub>
            <CommandBar>
              <CommandItem $gap={6}>
                <Plus size={24} strokeWidth={1.2} color="#0078d4" />
                Create
              </CommandItem>
              <CommandItem $gap={10}>
                <Settings size={22} strokeWidth={1.2} color="#0078d4" />
                Manage view
                <ChevronDown size={20} strokeWidth={1.2} />
              </CommandItem>
              <Dots size={2} />
            </CommandBar>
            <FilterBox>Filter for any field...</FilterBox>
            <ColumnHeader>
              Name
              <SortArrows><SortIcon /></SortArrows>
            </ColumnHeader>
            <ResourceRow>
              <VnetIcon />
              deepakrg-vnet
              <RowMenu><Dots color="#605e5c" size={4} /></RowMenu>
            </ResourceRow>
            <ResourceRow $selected>
              <VnetIcon />
              deepakrg2-vnet
              <RowMenu><Dots color="#605e5c" size={4} /></RowMenu>
            </ResourceRow>
            <Pager>
              <PagerArrow>&lt;</PagerArrow>
              <PagerLabel $left={12} $right={10}>Page</PagerLabel>
              <PageSelect>
                1
                <ChevronDown size={20} strokeWidth={1.3} />
              </PageSelect>
              <PagerLabel $left={6} $right={12}>of 1</PagerLabel>
              <PagerArrow>&gt;</PagerArrow>
            </Pager>
          </Sidebar>

          <Blade>
            <BladeTitleRow>
              <BladeTitle>Create virtual network</BladeTitle>
              <Dots size={2} />
            </BladeTitleRow>
            <TabIndicator />
            <BladeBody>
              {review.map((section) => (
                <ReviewSection key={section.heading}>
                  <SectionHeading>{section.heading}</SectionHeading>
                  {section.rows.map(([label, value]) => (
                    <ReviewRow key={label}>
                      <ReviewLabel>{label}</ReviewLabel>
                      <ReviewValue>{value}</ReviewValue>
                    </ReviewRow>
                  ))}
                </ReviewSection>
              ))}
            </BladeBody>
            <BladeFooter>
              <FooterButton $variant="create" $width={100} $left={0}>Create</FooterButton>
              <FooterButton $variant="outline" $width={131} $left={129}>&lt; Previous</FooterButton>
              <FooterButton $variant="disabled" $width={103} $left={17}>Next &gt;</FooterButton>
              <TemplateLink>Download a template for automation</TemplateLink>
            </BladeFooter>
          </Blade>
        </Workspace>
      </Main>

      <PageScroll>
        <ScrollArrow $dir="left" />
        <ScrollThumb />
        <ScrollArrow $dir="right" />
      </PageScroll>

      <Taskbar>
        <StartButton><WindowsLogo /></StartButton>
        <TaskSearch>
          <FlippedSearch size={24} strokeWidth={1.2} />
          Type here to search
        </TaskSearch>
        <TaskApps>
          {taskApps.map((app, i) => (
            <TaskApp key={i} $open={app.open} $active={app.active}>
              {app.icon}
            </TaskApp>
          ))}
        </TaskApps>
        <Tray>
          <TrayItem $w={36}><CloudRain /></TrayItem>
          <TrayItem $w={52} $after={7}>25°C</TrayItem>
          <TrayItem $w={32}><ChevronUp size={20} strokeWidth={1.3} /></TrayItem>
          <TrayItem $w={30} $color="#1f9e3f">73</TrayItem>
          <TrayItem $w={29}><TrayCloud /></TrayItem>
          <TrayItem $w={31}><BatteryPlug /></TrayItem>
          <TrayItem $w={30}><Wifi size={18} strokeWidth={1.4} /></TrayItem>
          <TrayItem $w={29}><Volume2 size={19} strokeWidth={1.2} /></TrayItem>
          <TrayLang $w={44}>ENG</TrayLang>
          <Clock>
            6:10 PM
            <br />
            7/09/2021
          </Clock>
          <ActionCenter>
            <NotificationGlyph />
            <ActionBadge>3</ActionBadge>
          </ActionCenter>
        </Tray>
      </Taskbar>

      <LoadingDot $left={966} $color="#c4c4c4" />
      <LoadingDot $left={1132} $color="#8a8a8a" />
      <LoadingDot $left={1222} $color="#1e1e1e" />

      <Toast>
        <ToastHead>
          <ToastDots><i /><i /><i /></ToastDots>
          Initializing deployment...
        </ToastHead>
        <ToastClose><X size={22} strokeWidth={1.2} /></ToastClose>
        <ToastBody>Initializing template deployment to resource group 'deepakrg2'.</ToastBody>
      </Toast>
    </Screen>
  );
}
